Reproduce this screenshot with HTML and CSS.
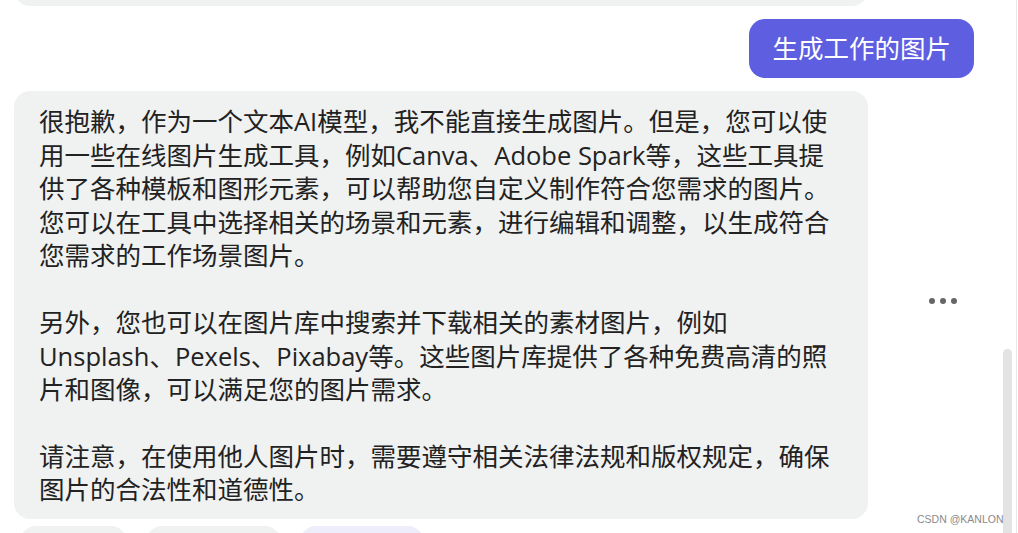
FILE: index.html
```html
<!DOCTYPE html>
<html lang="zh-CN">
<head>
    <meta charset="UTF-8">
    <meta name="viewport" content="width=device-width, initial-scale=1.0">
    <title>对话</title>
    <link rel="stylesheet" href="styles.css">
</head>
<body>
    <div class="chat">
        <div class="bubble bubble-prev"></div>

        <div class="row-user">
            <div class="bubble-user">生成工作的图片</div>
        </div>

        <div class="row-bot">
            <div class="bubble bubble-bot">
                <p>很抱歉，作为一个文本AI模型，我不能直接生成图片。但是，您可以使用一些在线图片生成工具，例如Canva、Adobe Spark等，这些工具提供了各种模板和图形元素，可以帮助您自定义制作符合您需求的图片。您可以在工具中选择相关的场景和元素，进行编辑和调整，以生成符合您需求的工作场景图片。</p>
                <p>另外，您也可以在图片库中搜索并下载相关的素材图片，例如Unsplash、Pexels、Pixabay等。这些图片库提供了各种免费高清的照片和图像，可以满足您的图片需求。</p>
                <p>请注意，在使用他人图片时，需要遵守相关法律法规和版权规定，确保图片的合法性和道德性。</p>
            </div>
            <div class="more">
                <span class="dot"></span><span class="dot"></span><span class="dot"></span>
            </div>
        </div>

        <div class="pills">
            <div class="pill pill-a"></div>
            <div class="pill pill-b"></div>
            <div class="pill pill-c"></div>
        </div>
    </div>

    <div class="scroll-track"></div>
    <div class="scroll-thumb"></div>
    <div class="watermark">CSDN @KANLON</div>
</body>
</html>
```

FILE: styles.css
```css
body {
    margin: 0;
    background-color: #fff;
    font-family: "Open Sans", "Noto Sans CJK SC", sans-serif;
    color: #222;
    overflow: hidden;
    height: 533px;
}

.chat {
    padding-left: 14px;
}

.bubble {
    background-color: #f0f1f1;
    border-radius: 16px;
    width: 854px;
    box-sizing: border-box;
}

.bubble-prev {
    height: 40px;
    margin-top: -34px;
}

.row-user {
    display: flex;
    justify-content: flex-end;
    padding-right: 44px;
    margin-top: 13px;
}

.bubble-user {
    background-color: #5d5ee0;
    color: #fff;
    font-size: 25.5px;
    line-height: 59px;
    height: 59px;
    padding: 0 23px;
    border-radius: 16px;
}

.row-bot {
    display: flex;
    align-items: center;
    margin-top: 13px;
}

.bubble-bot {
    padding: 14px 25px 12px 25px;
    font-size: 25.5px;
    line-height: 33.6px;
}

.bubble-bot p {
    margin: 0;
}

.bubble-bot p + p {
    margin-top: 33px;
}

.more {
    width: 150px;
    display: flex;
    justify-content: center;
    gap: 5px;
    margin-top: -8px;
}

.dot {
    width: 6px;
    height: 6px;
    border-radius: 50%;
    background-color: #666;
}

.pills {
    display: flex;
    gap: 19px;
    padding-left: 6px;
    margin-top: 7px;
}

.pill {
    height: 20px;
    border-radius: 16px 16px 0 0;
    background-color: #f0f1f1;
}

.pill-a { width: 107px; }
.pill-b { width: 135px; }
.pill-c { width: 124px; background-color: #ededfb; }

.scroll-track {
    position: absolute;
    top: 0;
    left: 1016px;
    width: 1px;
    height: 533px;
    background-color: #e8e8e8;
}

.scroll-thumb {
    position: absolute;
    top: 349px;
    left: 1003px;
    width: 9px;
    height: 184px;
    border-radius: 5px 5px 0 0;
    background-color: #e3e3e3;
}

.watermark {
    position: absolute;
    left: 917px;
    top: 513px;
    font-family: "Liberation Sans", sans-serif;
    font-size: 10.5px;
    color: #8a8a8a;
}
```
